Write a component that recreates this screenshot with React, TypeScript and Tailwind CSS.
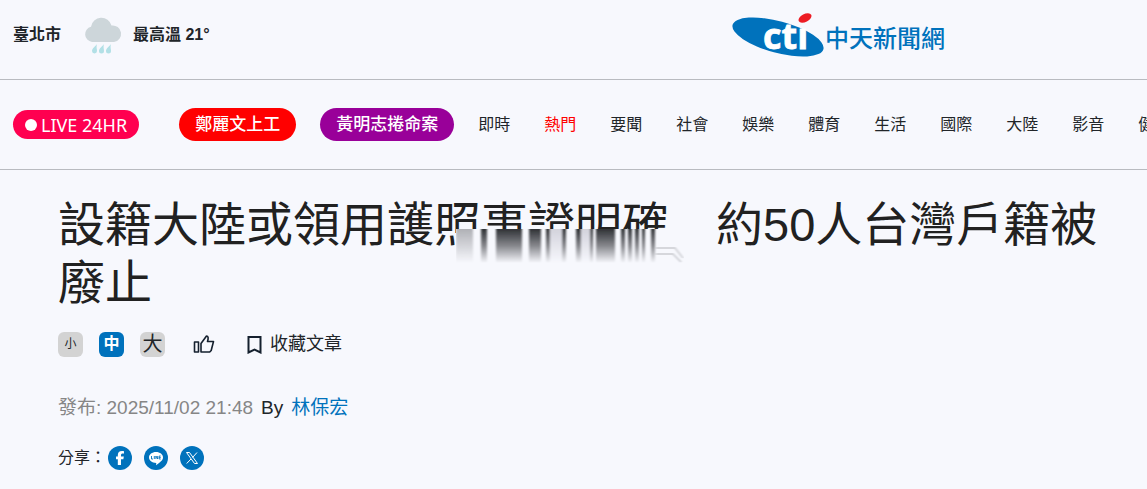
import React from "react";
import { FaFacebookF } from "react-icons/fa6";

const topics = ["即時", "熱門", "要聞", "社會", "娛樂", "體育", "生活", "國際", "大陸", "影音", "健康"];

const bars: [number, number, string][] = [
  [0, 17, "smudgeLight"],
  [25, 6, "smudgeDark"],
  [40, 26, "smudgeDark"],
  [73, 12, "smudgeDark"],
  [90, 4, "smudgeDark"],
  [94, 12, "smudgePale"],
  [106, 4, "smudgeDark"],
  [120, 5, "smudgeDark"],
  [125, 9, "smudgePale"],
  [134, 3, "smudgeDark"],
  [140, 19, "smudgeDark"],
  [165, 4, "smudgeDark"],
  [172, 4, "smudgeDark"],
  [179, 4, "smudgeDark"],
  [186, 3, "smudgeDark"],
  [195, 4, "smudgeDark"],
];

function WeatherIcon() {
  return (
    <svg viewBox="0 0 40 40" className="size-10" aria-hidden="true">
      <path d="M9 27a7.800 7.800 0 0 1-1-15.300A10.500 10.500 0 0 1 28.500 10.500 8.300 8.300 0 0 1 31 27Z" fill="#cdd6da" />
      <g fill="#b2e0e6">
        <path d="M14 29c-1 2-5 4-5 7a2.500 2.500 0 0 0 5 0c0-2-1-4 0-7ZM21 29c-1 2-5 4-5 7a2.500 2.500 0 0 0 5 0c0-2-1-4 0-7ZM28 29c-1 2-5 4-5 7a2.500 2.500 0 0 0 5 0c0-2-1-4 0-7Z" />
      </g>
    </svg>
  );
}

function Logo() {
  return (
    <a href="#home" className="flex shrink-0 items-center" aria-label="cti 中天新聞網">
      <svg viewBox="0 0 94 46" className="h-[46px] w-[94px]" aria-hidden="true">
        <ellipse cx="47" cy="25" rx="47" ry="15.800" transform="rotate(15 47 25)" fill="#0072bc" />
        <ellipse cx="74" cy="6" rx="7" ry="4" transform="rotate(-28 74 6)" fill="#ed1c24" />
        <text x="32" y="37" fill="#fff" stroke="#fff" strokeWidth="0.800" fontSize="36" fontWeight="700" fontFamily="Open Sans, sans-serif">ctı</text>
      </svg>
      <span className="pt-2 text-2xl font-medium text-[#0072bc]">中天新聞網</span>
    </a>
  );
}

function LineIcon() {
  return (
    <svg viewBox="0 0 24 24" className="size-6" aria-hidden="true">
      <path d="M12 6c4 0 7 2.400 7 5.500 0 2.700-3 5-7 7.700l.3-2.300C8 16.900 5 14.500 5 11.500 5 8.400 8 6 12 6Z" fill="#fff" />
      <path d="M7.500 10v3H9M10.300 10V13M11.900 13V10l1.800 3V10M16.700 10h-1.500V13h1.500M15.200 11.500h1.500" fill="none" stroke="#0072bc" strokeWidth="0.900" />
    </svg>
  );
}

function XIcon() {
  return (
    <svg viewBox="0 0 24 24" className="size-6" fill="none" stroke="#fff" aria-hidden="true">
      <path d="M6.500 6.500h3l8 11h-3ZM17 6.500l-4.500 5M11 13l-4.300 4.500" strokeWidth="1" />
    </svg>
  );
}

export default function App() {
  const share = "flex size-6 items-center justify-center rounded-full bg-[#0072bc] text-white";
  return (
    <div className="min-h-screen overflow-hidden bg-[#f7f8fd] font-['Liberation_Sans','Noto_Sans_CJK_TC',sans-serif] text-[#212529]">
      <header className="flex h-20 items-center justify-between border-b border-[#b9bbc0] pb-2.5 pl-[13px] pr-[202px]">
        <div className="flex items-center text-base font-bold">
          <span>臺北市</span>
          <span className="pl-[22px] pr-2.5"><WeatherIcon /></span>
          <span>最高溫 21°</span>
        </div>
        <Logo />
      </header>

      <nav className="flex h-[90px] items-center whitespace-nowrap border-b border-[#b9bbc0] pl-[13px] text-base">
        <a href="#live" className="flex h-[29px] shrink-0 items-center gap-1 rounded-full bg-[#ff0050] px-3 font-['Noto_Sans',sans-serif] text-lg text-white">
          <span className="size-3 rounded-full bg-white" />
          LIVE 24HR
        </a>
        <a href="#t1" className="ml-10 flex h-[33px] shrink-0 items-center rounded-full bg-[#ff0000] px-4 text-[17px] font-medium text-white">鄭麗文上工</a>
        <a href="#t2" className="ml-6 flex h-[33px] shrink-0 items-center rounded-full bg-[#990099] px-4 text-[17px] font-medium text-white">黃明志捲命案</a>
        <ul className="ml-6 flex gap-[34px]">
          {topics.map((t) => (
            <li key={t}>
              <a href={"#" + t} className={t === "熱門" ? "text-[#ff0000]" : ""}>{t}</a>
            </li>
          ))}
        </ul>
      </nav>

      <main className="pl-[58px] pr-10 pt-[26px]">
        <div className="relative">
          <h1 className="text-[47px] leading-[58px] text-[#212121]">設籍大陸或領用護照事證明確　約50人台灣戶籍被廢止</h1>
          <svg viewBox="0 0 228 35" className="absolute left-[398px] top-[33px] h-[35px] w-[228px]" aria-hidden="true">
            <defs>
              <linearGradient id="smudgeDark" x1="0" y1="0" x2="0" y2="1">
                <stop offset="0" stopColor="#303236" />
                <stop offset="0.500" stopColor="#88898e" />
                <stop offset="1" stopColor="#f7f8fd" />
              </linearGradient>
              <linearGradient id="smudgeLight" x1="0" y1="0" x2="0" y2="1">
                <stop offset="0" stopColor="#b0b1b6" />
                <stop offset="1" stopColor="#f7f8fd" />
              </linearGradient>
              <linearGradient id="smudgePale" x1="0" y1="0" x2="0" y2="1">
                <stop offset="0" stopColor="#d3d3dc" />
                <stop offset="1" stopColor="#f7f8fd" />
              </linearGradient>
              <filter id="soften" x="-5%" y="-5%" width="110%" height="110%">
                <feGaussianBlur stdDeviation="0.9 0" />
              </filter>
            </defs>
            <rect width="228" height="35" fill="#f7f8fd" />
            <g filter="url(#soften)">
              {bars.map(([x, w, fill]) => (
                <rect key={x} x={x} width={w} height="34" fill={`url(#${fill})`} />
              ))}
              <path d="M200 25h17l8 8M200 19h19l8 10" fill="none" stroke="#d6d7dc" strokeWidth="2" />
            </g>
          </svg>
        </div>

        <div className="flex items-center pt-[18px]">
          <div className="flex gap-4">
            <button className="size-[25px] rounded-md bg-[#d3d3d3] text-xs">小</button>
            <button className="size-[25px] rounded-md bg-[#0072bc] text-base font-bold leading-6 text-white">中</button>
            <button className="size-[25px] rounded-md bg-[#d3d3d3] text-xl leading-6">大</button>
          </div>
          <button aria-label="讚" className="ml-7">
            <svg viewBox="0 0 22 20" className="h-5 w-[22px]" fill="none" stroke="#15202e" strokeWidth="1.600" strokeLinejoin="round">
              <path d="M1.500 8h4v10h-4ZM8 9.500l5.500-7.500c1.700 0 2.200 1.700 1 5.500h6l-2.300 9-1.500 1.500H8Z" />
            </svg>
          </button>
          <button className="ml-8 flex items-center gap-2 text-lg">
            <svg viewBox="0 0 15 19" className="h-[19px] w-[15px]" fill="none" stroke="#15202e" strokeWidth="2">
              <path d="M1.500 2h12v15.500l-6-3-6 3Z" />
            </svg>
            收藏文章
          </button>
        </div>

        <p className="flex gap-2 pt-9 text-[19px] leading-7">
          <span className="text-[#868686]">發布: 2025/11/02 21:48</span>
          <span>By</span>
          <a href="#author" className="text-[#0072bc]">林保宏</a>
        </p>

        <div className="flex items-center pt-6 text-base">
          <span className="pr-0.5">分享：</span>
          <div className="flex gap-3">
            <a href="#facebook" aria-label="Facebook" className={share}><FaFacebookF size={14} /></a>
            <a href="#line" aria-label="LINE" className={share}><LineIcon /></a>
            <a href="#x" aria-label="X" className={share}><XIcon /></a>
          </div>
        </div>
      </main>
    </div>
  );
}
